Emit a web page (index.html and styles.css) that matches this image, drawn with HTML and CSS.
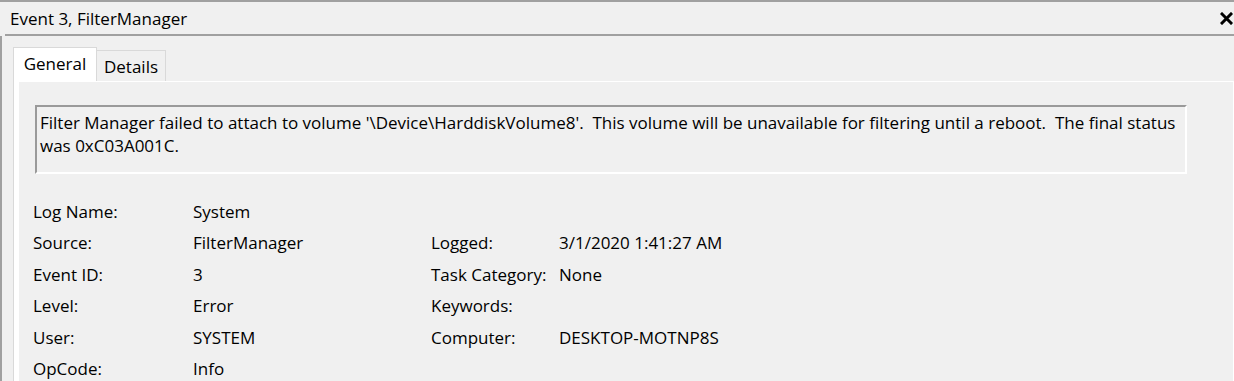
FILE: index.html
```html
<!DOCTYPE html>
<html lang="en">
<head>
    <meta charset="UTF-8">
    <meta name="viewport" content="width=device-width, initial-scale=1.0">
    <title>Event 3, FilterManager</title>
    <link rel="stylesheet" href="styles.css">
</head>
<body>
    <div class="window">
        <div class="titlebar">
            <span class="title">Event 3, FilterManager</span>
            <span class="close">
                <svg width="13" height="13" viewBox="0 0 13 13">
                    <path d="M2 2 L11 11 M11 2 L2 11" stroke="#000" stroke-width="3" stroke-linecap="square" fill="none"/>
                </svg>
            </span>
        </div>
        <div class="sep"></div>
        <div class="pane">
            <div class="tabs">
                <div class="tab active">General</div>
                <div class="tab">Details</div>
            </div>
            <div class="page">
                <div class="content">
                    <div class="message">Filter Manager failed to attach to volume '\Device\HarddiskVolume8'.  This volume will be unavailable for filtering until a reboot.  The final status
was 0xC03A001C.</div>
                    <div class="props">
                        <span>Log Name:</span><span>System</span><span></span><span></span>
                        <span>Source:</span><span>FilterManager</span><span>Logged:</span><span>3/1/2020 1:41:27 AM</span>
                        <span>Event ID:</span><span>3</span><span>Task Category:</span><span>None</span>
                        <span>Level:</span><span>Error</span><span>Keywords:</span><span></span>
                        <span>User:</span><span>SYSTEM</span><span>Computer:</span><span>DESKTOP-MOTNP8S</span>
                        <span>OpCode:</span><span>Info</span><span></span><span></span>
                    </div>
                </div>
            </div>
        </div>
    </div>
</body>
</html>
```

FILE: styles.css
```css
html, body {
    margin: 0;
    padding: 0;
    background: #f0f0f0;
}
body {
    font-family: "Open Sans", "Noto Sans", sans-serif;
    font-size: 17px;
    color: #000;
    overflow: hidden;
}
.window {
    width: 1234px;
    height: 381px;
    border-top: 2px solid #a0a0a0;
    box-sizing: border-box;
    overflow: hidden;
}
.titlebar {
    height: 32px;
    padding-top: 1px;
    line-height: 31px;
    padding-left: 10px;
    box-sizing: border-box;
    display: flex;
    justify-content: space-between;
}
.close {
    display: flex;
    align-items: center;
    margin-right: 1px;
    padding-bottom: 1px;
}
.sep {
    margin-left: 5px;
    border-top: 2px solid #a0a0a0;
}
.pane {
    border-left: 2px solid #a0a0a0;
    padding: 11px 0 0 11px;
    height: 400px;
}
.tabs {
    display: flex;
    align-items: flex-end;
}
.tab {
    width: 68px;
    height: 28px;
    line-height: 28px;
    padding-top: 2px;
    box-sizing: content-box;
    border: 1px solid #d9d9d9;
    border-bottom: none;
    border-left: none;
    text-align: center;
}
.tab.active {
    width: 82px;
    height: 33px;
    line-height: 31px;
    padding-top: 0;
    background: #fff;
    border-left: 1px solid #d9d9d9;
}
.page {
    background: #fff;
    border-left: 1px solid #d9d9d9;
    border-right: 1px solid #fff;
    padding: 1px 0 0 5px;
    height: 300px;
}
.content {
    background: #f0f0f0;
    height: 100%;
    padding: 23px 0 0 14px;
    box-sizing: border-box;
}
.message {
    width: 1152px;
    height: 69px;
    margin-left: 2px;
    box-sizing: border-box;
    border: 2px solid;
    border-color: #9a9a9a #fff #fff #9a9a9a;
    padding: 4px 0 0 3px;
    line-height: 23px;
    white-space: pre;
    overflow: hidden;
}
.props {
    display: grid;
    grid-template-columns: 160px 238px 128px auto;
    grid-auto-rows: 31.6px;
    line-height: 31.6px;
    margin-top: 21.5px;
    white-space: nowrap;
}
```
